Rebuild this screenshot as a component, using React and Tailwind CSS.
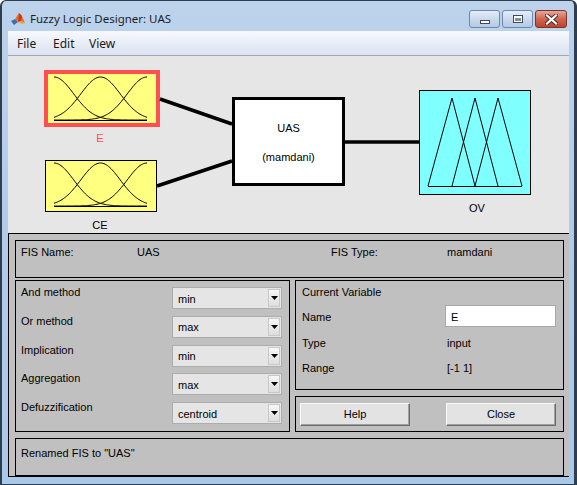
import React from "react";

const SIG = 0.4247;
function gaussPts(c, x0, x1, yb, yt) {
  const pts = [];
  for (let i = 0; i <= 80; i++) {
    const u = -1 + (2 * i) / 80;
    const v = Math.exp(-((u - c) ** 2) / (2 * SIG * SIG));
    const x = x0 + ((u + 1) / 2) * (x1 - x0);
    const y = yb - v * (yb - yt);
    pts.push(`${x.toFixed(2)},${y.toFixed(2)}`);
  }
  return pts.join(" ");
}

function MfSet({ x0, x1, yb, yt }) {
  return (
    <g fill="none" stroke="#000" strokeWidth="1">
      <line x1={x0} y1={yb + 0.5} x2={x1} y2={yb + 0.5} />
      <polyline points={gaussPts(-1, x0, x1, yb, yt)} />
      <polyline points={gaussPts(0, x0, x1, yb, yt)} />
      <polyline points={gaussPts(1, x0, x1, yb, yt)} />
    </g>
  );
}

function Dropdown({ value }) {
  return (
    <div className="w-[110px] h-[22px] border border-[#acacac] bg-[#e5e5e5] flex items-stretch">
      <div className="flex-1 flex items-center pl-[5px] pt-[2px]">{value}</div>
      <div className="w-[12px] my-[1px] mr-[1px] bg-gradient-to-b from-[#f7f7f7] to-[#dedede] border border-[#c8c8c8] flex items-center justify-center">
        <svg width="7" height="4" viewBox="0 0 7 4">
          <polygon points="0,0 7,0 3.5,4" fill="#000" />
        </svg>
      </div>
    </div>
  );
}

function Btn({ label }) {
  return (
    <div className="w-[110px] h-[23px] flex items-center justify-center bg-[#e3e3e3] border border-t-[#f8f8f8] border-l-[#f8f8f8] border-r-[#6a6a6a] border-b-[#6a6a6a] shadow-[inset_-1px_-1px_0_#a0a0a0]">
      {label}
    </div>
  );
}

export default function App() {
  const rows = [
    ["And method", "min"],
    ["Or method", "max"],
    ["Implication", "min"],
    ["Aggregation", "max"],
    ["Defuzzification", "centroid"],
  ];
  return (
    <div className="w-[577px] h-[485px] bg-white">
      <div className="w-full h-full flex flex-col bg-gradient-to-b from-[#bdd3ec] via-[#b1cbe8] to-[#a9c9ea] border-l-2 border-r-[3px] border-t border-b border-[#2f3d4f] rounded-t-[6px] overflow-hidden">
        {/* Title bar */}
        <div className="h-[30px] flex items-start pl-[9px] pr-[7px] shrink-0">
          <div className="mt-[11px] w-[15px] h-[14px]">
            <svg width="15" height="14" viewBox="0 0 15 14">
              <polygon points="0,9 4,7 7,10 3,13" fill="#3a6fb0" />
              <polygon points="4,7 8,1 11,4 14,11 10,9 7,10" fill="#e8702a" />
              <polygon points="8,1 9,2 11,4 10,9 7,10" fill="#c43b1a" />
              <polygon points="7,10 10,9 14,11 11,12" fill="#f0a040" />
            </svg>
          </div>
          <div className="mt-[10px] ml-[4px] text-[11.5px] leading-[16px] text-[#1e1e1e] font-['Noto_Sans',sans-serif]">
            Fuzzy Logic Designer: UAS
          </div>
          <div className="ml-auto mt-[9px] flex gap-[2px]">
            <div className="w-[31px] h-[18px] rounded-[3px] border border-[#6d88aa] bg-gradient-to-b from-[#e4edf8] via-[#c9daee] to-[#b3c9e5] flex items-center justify-center">
              <div className="w-[10px] h-[4px] mt-[5px] bg-white border border-[#3c4a5c]" />
            </div>
            <div className="w-[31px] h-[18px] rounded-[3px] border border-[#6d88aa] bg-gradient-to-b from-[#e4edf8] via-[#c9daee] to-[#b3c9e5] flex items-center justify-center">
              <div className="w-[10px] h-[8px] bg-white border border-[#3c4a5c] flex items-center justify-center">
                <div className="w-[6px] h-[3px] bg-[#7c8ea3]" />
              </div>
            </div>
            <div className="w-[32px] h-[18px] rounded-[3px] border border-[#7b3328] bg-gradient-to-b from-[#e9a598] via-[#d06350] to-[#c0432f] flex items-center justify-center">
              <svg width="13" height="11" viewBox="0 0 13 11">
                <path d="M2 1.5 L11 9.5 M11 1.5 L2 9.5" stroke="#4a2a26" strokeWidth="4" strokeLinecap="square" />
                <path d="M2 1.5 L11 9.5 M11 1.5 L2 9.5" stroke="#ffffff" strokeWidth="2.2" strokeLinecap="square" />
              </svg>
            </div>
          </div>
        </div>

        {/* Client */}
        <div className="flex-1 flex flex-col ml-[6px] mr-[5px] mb-[7px] font-['Liberation_Sans',Arial,sans-serif] text-[11px] leading-[13px] text-black">
          {/* Menu bar */}
          <div className="h-[25px] shrink-0 flex items-center pl-[9px] bg-gradient-to-b from-[#f7f9fd] to-[#dae2f0] border-b border-[#a3a8b0] font-['Noto_Sans',sans-serif] text-[12px] text-[#1a1a1a]">
            <span className="w-[36px]">File</span>
            <span className="w-[36px]">Edit</span>
            <span className="w-[36px]">View</span>
          </div>

          {/* Diagram */}
          <div className="h-[177px] shrink-0 relative bg-[#e6e6e6]">
            <div className="absolute left-[36px] top-[14px] w-[116px] h-[57px] bg-[#ffff80] border-[4px] border-[#ff4f4f]" />
            <div className="absolute left-[72px] top-[76px] w-[40px] text-center text-[#ff4f4f]">E</div>
            <div className="absolute left-[37px] top-[104px] w-[112px] h-[52px] bg-[#ffff80] border border-black" />
            <div className="absolute left-[72px] top-[163px] w-[40px] text-center">CE</div>
            <div className="absolute left-[224px] top-[41px] w-[113px] h-[89px] bg-white border-[3px] border-black flex flex-col items-center pt-[22px]">
              <div>UAS</div>
              <div className="mt-[16px]">(mamdani)</div>
            </div>
            <div className="absolute left-[411px] top-[34px] w-[112px] h-[105px] bg-[#80ffff] border border-black" />
            <div className="absolute left-[449px] top-[146px] w-[40px] text-center">OV</div>
            <svg className="absolute inset-0 pointer-events-none" width="561" height="177" viewBox="0 0 561 177">
              <g stroke="#000" strokeWidth="3.5">
                <line x1="152" y1="43" x2="224" y2="68" />
                <line x1="149" y1="130" x2="224" y2="105" />
                <line x1="337" y1="86" x2="411" y2="86" />
              </g>
              <MfSet x0={46} x1={139} yb={64} yt={21} />
              <MfSet x0={46} x1={139} yb={150} yt={107} />
              <g fill="none" stroke="#000" strokeWidth="1">
                <line x1="420" y1="130.5" x2="514" y2="130.5" />
                <polyline points="420,130 444,42 467,130" />
                <polyline points="444,130 467,42 490,130" />
                <polyline points="467,130 490,42 514,130" />
              </g>
            </svg>
          </div>

          {/* Lower panel */}
          <div className="flex-1 bg-[#c0c0c0] border-t border-l border-b border-black pl-[6px] pr-[5px] pt-[6px] flex flex-col">
            <div className="h-[38px] border border-black flex pl-[5px] pt-[5px]">
              <span className="w-[116px]">FIS Name:</span>
              <span className="w-[194px]">UAS</span>
              <span className="w-[116px]">FIS Type:</span>
              <span>mamdani</span>
            </div>
            <div className="mt-[2px] h-[152px] flex gap-[5px]">
              <div className="w-[275px] border border-black pt-[6px] pl-[5px] pr-[7px] flex flex-col">
                {rows.map(([l, v]) => (
                  <div key={l} className="h-[29px] flex items-start justify-between">
                    <span className="mt-[-1px]">{l}</span>
                    <Dropdown value={v} />
                  </div>
                ))}
              </div>
              <div className="flex-1 flex flex-col gap-[6px]">
                <div className="h-[110px] border border-black pl-[6px] pr-[7px] pt-[5px] flex flex-col">
                  <div>Current Variable</div>
                  <div className="mt-[6px] flex items-start justify-between">
                    <span className="mt-[6px]">Name</span>
                    <div className="w-[111px] h-[22px] bg-white border border-[#a9a9a9] pl-[5px] pt-[5px]">E</div>
                  </div>
                  <div className="mt-[10px] flex">
                    <span className="w-[145px]">Type</span>
                    <span>input</span>
                  </div>
                  <div className="mt-[12px] flex">
                    <span className="w-[145px]">Range</span>
                    <span>[-1 1]</span>
                  </div>
                </div>
                <div className="h-[36px] border border-black flex items-center justify-between pl-[4px] pr-[7px]">
                  <Btn label="Help" />
                  <Btn label="Close" />
                </div>
              </div>
            </div>
            <div className="mt-[6px] h-[38px] border border-black pl-[5px] pt-[8px]">Renamed FIS to "UAS"</div>
          </div>
        </div>
      </div>
    </div>
  );
}
